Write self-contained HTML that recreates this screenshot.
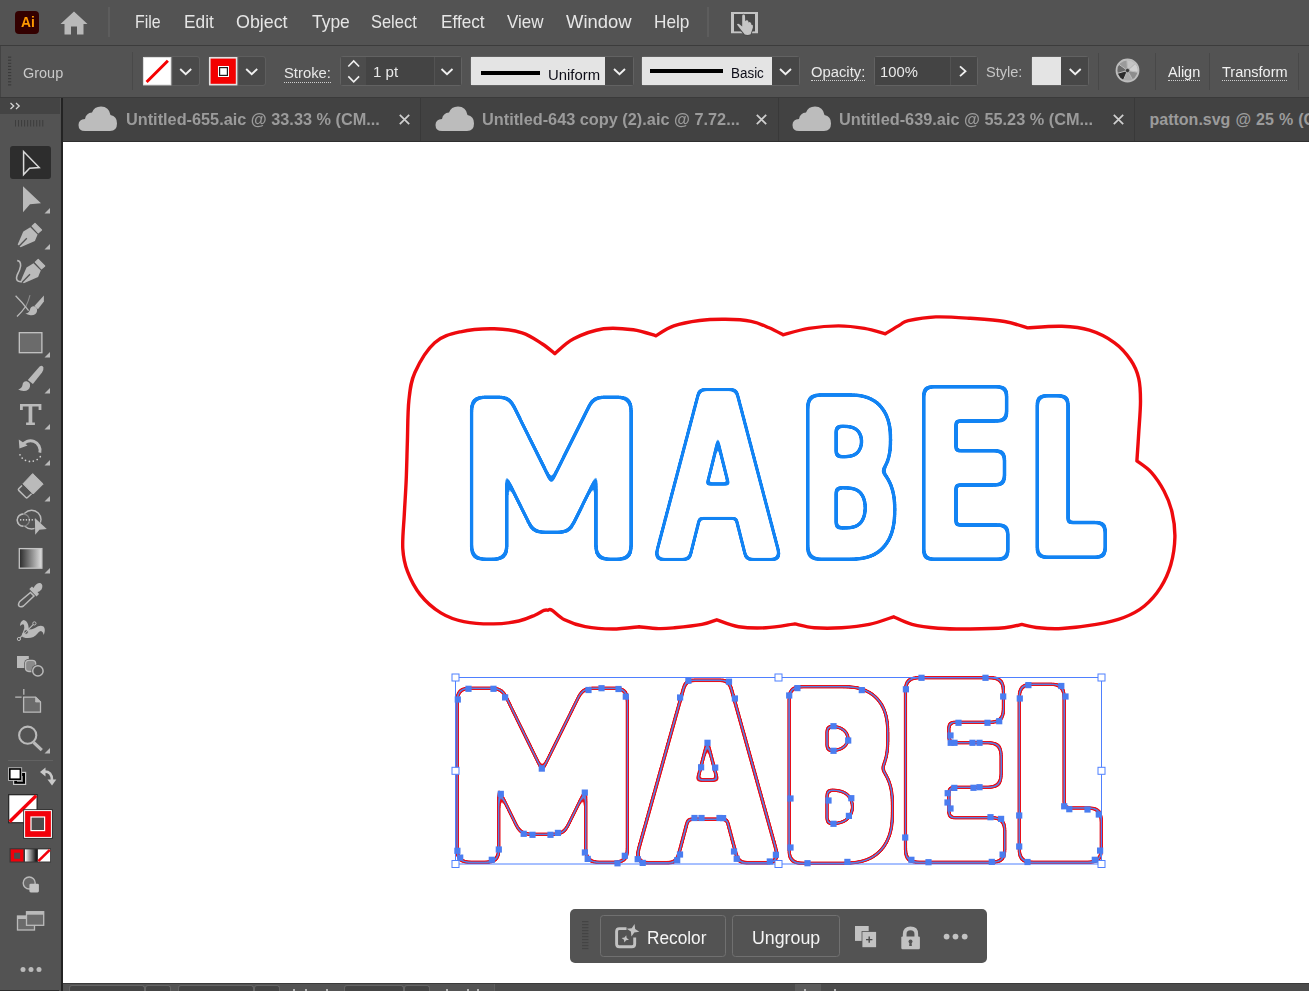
<!DOCTYPE html>
<html lang="en"><head><meta charset="utf-8"><title>Adobe Illustrator</title>
<style>
html,body{margin:0;padding:0}
body{width:1309px;height:991px;overflow:hidden;background:#fff;position:relative;font-family:"Liberation Sans",sans-serif;}
.a{position:absolute;display:block}
.t{position:absolute;white-space:nowrap;line-height:1;transform-origin:0 50%;}
.du{border-bottom:1px dotted #d0d0d0;padding-bottom:1px}
svg{overflow:visible}
</style></head><body>
<div class="a " style="left:0px;top:0px;width:1309px;height:45px;background:#535353;"></div>
<div class="a " style="left:0px;top:45px;width:1309px;height:1px;background:#3c3c3c;"></div>
<div class="a" style="left:15px;top:11px;width:24px;height:23px;background:#330000;border-radius:4px"></div>
<span class="t " style="left:21.00px;top:15px;font-size:14.5px;color:#ff9a00;font-weight:bold;transform:scaleX(0.9517);">Ai</span>
<svg class="a" style="left:60px;top:11px;" width="28" height="24" viewBox="0 0 28 24"><path d="M14 0.5 L27.5 13 L23.5 13 L23.5 23.5 L17 23.5 L17 15.5 L11 15.5 L11 23.5 L4.5 23.5 L4.5 13 L0.5 13 Z" fill="#b9b9b9"/></svg>
<div class="a " style="left:107.7px;top:7px;width:2.6px;height:30px;background:#5d5d5d;"></div>
<span class="t " style="left:134.60px;top:12px;font-size:19px;color:#e6e6e6;transform:scaleX(0.8392);">File</span>
<span class="t " style="left:183.50px;top:12px;font-size:19px;color:#e6e6e6;transform:scaleX(0.9099);">Edit</span>
<span class="t " style="left:236.00px;top:12px;font-size:19px;color:#e6e6e6;transform:scaleX(0.9392);">Object</span>
<span class="t " style="left:311.60px;top:12px;font-size:19px;color:#e6e6e6;transform:scaleX(0.9178);">Type</span>
<span class="t " style="left:371.30px;top:12px;font-size:19px;color:#e6e6e6;transform:scaleX(0.8653);">Select</span>
<span class="t " style="left:440.60px;top:12px;font-size:19px;color:#e6e6e6;transform:scaleX(0.9036);">Effect</span>
<span class="t " style="left:507.40px;top:12px;font-size:19px;color:#e6e6e6;transform:scaleX(0.8940);">View</span>
<span class="t " style="left:566.00px;top:12px;font-size:19px;color:#e6e6e6;transform:scaleX(0.9706);">Window</span>
<span class="t " style="left:653.60px;top:12px;font-size:19px;color:#e6e6e6;transform:scaleX(0.9062);">Help</span>
<div class="a " style="left:706.5px;top:7px;width:2.6px;height:30px;background:#5d5d5d;"></div>
<svg class="a" style="left:731px;top:12px;" width="27" height="24" viewBox="0 0 27 24"><path d="M0 0 H27 V21.3 H0 Z M3 2.1 V19.2 H24 V2.1 Z" fill="#c4c4c4" fill-rule="evenodd"/><rect x="3" y="2.1" width="21" height="17.1" fill="#494949"/><path d="M11.2 4 Q11.2 2.6 12.6 2.6 Q14 2.6 14 4 L14.2 9.3 Q15 7.9 16.3 8.2 Q17.5 8.7 17.5 10.4 Q18.5 9.7 19.5 10.4 Q20.5 11.2 20.3 12.7 Q21.4 12.4 21.9 13.5 Q22.4 15 21 18.2 L19.6 22.2 Q17 23.6 13.8 22.6 L9 16.6 L6 12.6 Q6.5 11.2 8 12 L11.2 14.6 Z" fill="#c6c6c6" stroke="#4b4b4b" stroke-width="1.8" paint-order="stroke"/></svg>
<div class="a " style="left:0px;top:46px;width:1309px;height:51px;background:#535353;"></div>
<div class="a " style="left:0px;top:46px;width:1px;height:51px;background:#434343;"></div>
<div class="a " style="left:0px;top:96.7px;width:1309px;height:1.6px;background:#3a3a3a;"></div>
<svg class="a" style="left:8px;top:56px;" width="4" height="30" viewBox="0 0 4 30"><rect x="0" y="0.60" width="3.2" height="1.1" fill="#3a3a3a"/><rect x="0" y="3.68" width="3.2" height="1.1" fill="#3a3a3a"/><rect x="0" y="6.76" width="3.2" height="1.1" fill="#3a3a3a"/><rect x="0" y="9.84" width="3.2" height="1.1" fill="#3a3a3a"/><rect x="0" y="12.92" width="3.2" height="1.1" fill="#3a3a3a"/><rect x="0" y="16.00" width="3.2" height="1.1" fill="#3a3a3a"/><rect x="0" y="19.08" width="3.2" height="1.1" fill="#3a3a3a"/><rect x="0" y="22.16" width="3.2" height="1.1" fill="#3a3a3a"/><rect x="0" y="25.24" width="3.2" height="1.1" fill="#3a3a3a"/><rect x="0" y="28.32" width="3.2" height="1.1" fill="#3a3a3a"/></svg>
<span class="t " style="left:23.20px;top:65px;font-size:15px;color:#c9c9c9;transform:scaleX(0.9643);">Group</span>
<div class="a " style="left:132px;top:52px;width:1px;height:38px;background:#494949;"></div>
<div class="a " style="left:142px;top:56px;width:58px;height:30px;background:transparent;border:1px solid #5e5e5e;border-radius:3px;box-sizing:border-box"></div>
<div class="a " style="left:172.5px;top:57px;width:26.5px;height:28.4px;background:#4a4a4a;border-radius:0 3px 3px 0"></div>
<svg class="a" style="left:143px;top:57px;" width="28.4" height="28.4" viewBox="0 0 28.4 28.4"><rect width="28.4" height="28.4" fill="#dcdcdc"/><rect x="1" y="1" width="26.4" height="26.4" fill="#fff"/><path d="M3.6 25 L24.9 3.8" stroke="#f50000" stroke-width="3"/></svg>
<svg class="a" style="left:0px;top:0px;" width="1309" height="100" viewBox="0 0 1309 100"><path d="M180.2 69 l5.5 5.2 l5.5 -5.2" fill="none" stroke="#f0f0f0" stroke-width="1.9"/></svg>
<div class="a " style="left:208px;top:56px;width:58px;height:30px;background:transparent;border:1px solid #5e5e5e;border-radius:3px;box-sizing:border-box"></div>
<div class="a " style="left:238.5px;top:57px;width:26px;height:28.4px;background:#4a4a4a;border-radius:0 3px 3px 0"></div>
<svg class="a" style="left:209px;top:57px;" width="28.4" height="28.4" viewBox="0 0 28.4 28.4"><rect width="28.4" height="28.4" fill="#e2e2e2"/><rect x="1.6" y="1.6" width="25.2" height="25.2" fill="#f30000"/><rect x="9" y="9" width="11" height="11" fill="#fff"/><rect x="10.6" y="10.6" width="7.8" height="7.8" fill="#fff" stroke="#1e1e1e" stroke-width="1.2"/></svg>
<svg class="a" style="left:0px;top:0px;" width="1309" height="100" viewBox="0 0 1309 100"><path d="M246.2 69 l5.5 5.2 l5.5 -5.2" fill="none" stroke="#f0f0f0" stroke-width="1.9"/></svg>
<span class="t " style="left:283.90px;top:65px;font-size:15.5px;color:#e9e9e9;transform:scaleX(0.9547);">Stroke:</span>
<div class="a " style="left:284px;top:81px;width:47px;height:1px;background:transparent;border-bottom:1.5px dotted #cfcfcf"></div>
<div class="a " style="left:340px;top:56px;width:122px;height:30px;background:transparent;border:1px solid #626262;border-radius:3px;box-sizing:border-box"></div>
<div class="a " style="left:366px;top:57px;width:68px;height:28px;background:#444;"></div>
<div class="a " style="left:435px;top:57px;width:26px;height:28px;background:#474747;"></div>
<div class="a " style="left:341px;top:57px;width:25px;height:28px;background:#4c4c4c;"></div>
<svg class="a" style="left:0px;top:0px;" width="1309" height="100" viewBox="0 0 1309 100"><path d="M348.3 66.5 l5.4 -5.6 l5.4 5.6 M348.3 76.4 l5.4 5.4 l5.4 -5.4" fill="none" stroke="#f0f0f0" stroke-width="1.6"/></svg>
<span class="t " style="left:372.80px;top:64px;font-size:15.5px;color:#e9e9e9;transform:scaleX(0.9739);">1 pt</span>
<svg class="a" style="left:0px;top:0px;" width="1309" height="100" viewBox="0 0 1309 100"><path d="M441.5 69 l5.5 5.2 l5.5 -5.2" fill="none" stroke="#f0f0f0" stroke-width="1.9"/></svg>
<div class="a " style="left:470px;top:56px;width:164px;height:30px;background:transparent;border:1px solid #626262;border-radius:3px;box-sizing:border-box"></div>
<div class="a " style="left:471px;top:57px;width:134px;height:28px;background:#e4e4e4;"></div>
<div class="a " style="left:605px;top:57px;width:28px;height:28px;background:#474747;"></div>
<div class="a " style="left:481px;top:70.5px;width:59px;height:4px;background:#000;"></div>
<span class="t " style="left:547.50px;top:67px;font-size:15.5px;color:#0d0d18;transform:scaleX(0.9585);">Uniform</span>
<svg class="a" style="left:0px;top:0px;" width="1309" height="100" viewBox="0 0 1309 100"><path d="M614 69 l5.5 5.2 l5.5 -5.2" fill="none" stroke="#f0f0f0" stroke-width="1.9"/></svg>
<div class="a " style="left:641px;top:56px;width:159px;height:30px;background:transparent;border:1px solid #626262;border-radius:3px;box-sizing:border-box"></div>
<div class="a " style="left:642px;top:57px;width:130px;height:28px;background:#e4e4e4;"></div>
<div class="a " style="left:772px;top:57px;width:27px;height:28px;background:#474747;"></div>
<div class="a " style="left:649.8px;top:69px;width:73.4px;height:4px;background:#000;"></div>
<span class="t " style="left:731.30px;top:65px;font-size:15.5px;color:#0d0d18;transform:scaleX(0.8660);">Basic</span>
<svg class="a" style="left:0px;top:0px;" width="1309" height="100" viewBox="0 0 1309 100"><path d="M780 69 l5.5 5.2 l5.5 -5.2" fill="none" stroke="#f0f0f0" stroke-width="1.9"/></svg>
<span class="t " style="left:810.70px;top:64px;font-size:15.5px;color:#e9e9e9;transform:scaleX(0.9547);">Opacity:</span>
<div class="a " style="left:811px;top:79px;width:54px;height:1px;background:transparent;border-bottom:1.5px dotted #cfcfcf"></div>
<div class="a " style="left:874px;top:56px;width:104px;height:30px;background:transparent;border:1px solid #626262;border-radius:3px;box-sizing:border-box"></div>
<div class="a " style="left:875px;top:57px;width:75px;height:28px;background:#444;"></div>
<div class="a " style="left:951px;top:57px;width:26px;height:28px;background:#474747;"></div>
<span class="t " style="left:879.50px;top:64px;font-size:15.5px;color:#e9e9e9;transform:scaleX(0.9539);">100%</span>
<svg class="a" style="left:0px;top:0px;" width="1309" height="100" viewBox="0 0 1309 100"><path d="M960 66.3 l5.5 4.9 l-5.5 4.9" fill="none" stroke="#f0f0f0" stroke-width="1.8"/></svg>
<span class="t " style="left:986.00px;top:64px;font-size:15.5px;color:#c6c6c6;transform:scaleX(0.9394);">Style:</span>
<div class="a " style="left:1031px;top:56px;width:58px;height:30px;background:transparent;border:1px solid #626262;border-radius:3px;box-sizing:border-box"></div>
<div class="a " style="left:1032px;top:57px;width:29px;height:28px;background:#e4e4e4;"></div>
<div class="a " style="left:1061px;top:57px;width:27px;height:28px;background:#474747;"></div>
<svg class="a" style="left:0px;top:0px;" width="1309" height="100" viewBox="0 0 1309 100"><path d="M1069.7 69 l5.5 5.2 l5.5 -5.2" fill="none" stroke="#f0f0f0" stroke-width="1.9"/></svg>
<div class="a " style="left:1098px;top:53px;width:1px;height:37px;background:#484848;"></div>
<div class="a " style="left:1155px;top:53px;width:1px;height:37px;background:#484848;"></div>
<div class="a " style="left:1209px;top:53px;width:1px;height:37px;background:#484848;"></div>
<div class="a " style="left:1298px;top:53px;width:1px;height:37px;background:#484848;"></div>
<svg class="a" style="left:1115px;top:58px;" width="25" height="25" viewBox="0 0 25 25"><path d="M12.5 12.5 L22.84 14.32 A10.5 10.5 0 0 1 17.52 21.72 Z" fill="#8d8d8d"/><path d="M12.5 12.5 L17.52 21.72 A10.5 10.5 0 0 1 8.42 22.18 Z" fill="#a9a9a9"/><path d="M12.5 12.5 L8.42 22.18 A10.5 10.5 0 0 1 2.39 15.34 Z" fill="#2b2b2b"/><path d="M12.5 12.5 L2.39 15.34 A10.5 10.5 0 0 1 3.97 6.37 Z" fill="#6a6a6a"/><path d="M12.5 12.5 L3.97 6.37 A10.5 10.5 0 0 1 11.98 2.01 Z" fill="#9a9a9a"/><path d="M12.5 12.5 L11.98 2.01 A10.5 10.5 0 0 1 20.37 5.55 Z" fill="#c4c4c4"/><path d="M12.5 12.5 L20.37 5.55 A10.5 10.5 0 0 1 22.84 14.32 Z" fill="#d0d0d0"/><circle cx="12.5" cy="12.5" r="11" fill="none" stroke="#bdbdbd" stroke-width="1.8"/><path d="M12.5 12.5 L22.84 14.32" stroke="#bdbdbd" stroke-width="1"/><path d="M12.5 12.5 L17.52 21.72" stroke="#bdbdbd" stroke-width="1"/><path d="M12.5 12.5 L8.42 22.18" stroke="#bdbdbd" stroke-width="1"/><path d="M12.5 12.5 L2.39 15.34" stroke="#bdbdbd" stroke-width="1"/><path d="M12.5 12.5 L3.97 6.37" stroke="#bdbdbd" stroke-width="1"/><path d="M12.5 12.5 L11.98 2.01" stroke="#bdbdbd" stroke-width="1"/><path d="M12.5 12.5 L20.37 5.55" stroke="#bdbdbd" stroke-width="1"/><circle cx="12.5" cy="12.5" r="2.2" fill="#3a3a3a" stroke="#bdbdbd" stroke-width="0.8"/></svg>
<span class="t " style="left:1167.60px;top:64px;font-size:15.5px;color:#f0f0f0;transform:scaleX(0.9350);">Align</span>
<div class="a " style="left:1168px;top:79px;width:32px;height:1px;background:transparent;border-bottom:1.5px dotted #cfcfcf"></div>
<span class="t " style="left:1221.70px;top:64px;font-size:15.5px;color:#f0f0f0;transform:scaleX(0.9363);">Transform</span>
<div class="a " style="left:1222px;top:79px;width:65px;height:1px;background:transparent;border-bottom:1.5px dotted #cfcfcf"></div>
<div class="a " style="left:59px;top:98px;width:1250px;height:43px;background:#424242;"></div>
<div class="a " style="left:63px;top:141px;width:1246px;height:1px;background:#2f2f2f;"></div>
<div class="a " style="left:59.3px;top:98px;width:1.7px;height:893px;background:#505050;"></div>
<div class="a " style="left:61px;top:98px;width:2px;height:893px;background:#232323;"></div>
<svg class="a" style="left:77.5px;top:106px;" width="39" height="26" viewBox="0 0 39 26"><path d="M7 25 Q0.5 25 0.5 19 Q0.5 13.5 7 13 Q8 7 14 6.5 Q16 0.5 23 0.5 Q31 0.5 32.5 9 Q39 10 39 17.5 Q39 25 32 25 Z" fill="#bcbcbc"/></svg>
<span class="t " style="left:125.60px;top:112px;font-size:16px;color:#9b9b9b;font-weight:bold;transform:scaleX(1.0175);">Untitled-655.aic @ 33.33 % (CM...</span>
<svg class="a" style="left:399px;top:113.5px;" width="11" height="11" viewBox="0 0 11 11"><path d="M0.8 0.8 L10.2 10.2 M10.2 0.8 L0.8 10.2" stroke="#cfcfcf" stroke-width="1.7" fill="none"/></svg>
<div class="a " style="left:420px;top:98px;width:1px;height:43px;background:#393939;"></div>
<svg class="a" style="left:434.8px;top:106px;" width="39" height="26" viewBox="0 0 39 26"><path d="M7 25 Q0.5 25 0.5 19 Q0.5 13.5 7 13 Q8 7 14 6.5 Q16 0.5 23 0.5 Q31 0.5 32.5 9 Q39 10 39 17.5 Q39 25 32 25 Z" fill="#bcbcbc"/></svg>
<span class="t " style="left:482.30px;top:112px;font-size:16px;color:#9b9b9b;font-weight:bold;transform:scaleX(1.0186);">Untitled-643 copy (2).aic @ 7.72...</span>
<svg class="a" style="left:756px;top:113.5px;" width="11" height="11" viewBox="0 0 11 11"><path d="M0.8 0.8 L10.2 10.2 M10.2 0.8 L0.8 10.2" stroke="#cfcfcf" stroke-width="1.7" fill="none"/></svg>
<div class="a " style="left:778px;top:98px;width:1px;height:43px;background:#393939;"></div>
<svg class="a" style="left:791.5px;top:106px;" width="39" height="26" viewBox="0 0 39 26"><path d="M7 25 Q0.5 25 0.5 19 Q0.5 13.5 7 13 Q8 7 14 6.5 Q16 0.5 23 0.5 Q31 0.5 32.5 9 Q39 10 39 17.5 Q39 25 32 25 Z" fill="#bcbcbc"/></svg>
<span class="t " style="left:839.40px;top:112px;font-size:16px;color:#9b9b9b;font-weight:bold;transform:scaleX(1.0187);">Untitled-639.aic @ 55.23 % (CM...</span>
<svg class="a" style="left:1113px;top:113.5px;" width="11" height="11" viewBox="0 0 11 11"><path d="M0.8 0.8 L10.2 10.2 M10.2 0.8 L0.8 10.2" stroke="#cfcfcf" stroke-width="1.7" fill="none"/></svg>
<div class="a " style="left:1134px;top:98px;width:1px;height:43px;background:#393939;"></div>
<span class="t" style="left:1149.5px;top:112px;font-size:16px;color:#9b9b9b;font-weight:bold;transform:scaleX(1.0);word-spacing:0.6px">patton.svg @ 25 % (C</span>
<div class="a " style="left:0px;top:98px;width:60px;height:893px;background:#535353;"></div>
<div class="a " style="left:0px;top:98.3px;width:60px;height:15.7px;background:#444;"></div>
<svg class="a" style="left:0px;top:0px;" width="63" height="991" viewBox="0 0 63 991"><path d="M10.5 103 l3.2 3 l-3.2 3 M16 103 l3.2 3 l-3.2 3" fill="none" stroke="#d4d4d4" stroke-width="1.3"/><rect x="15.00" y="120" width="1" height="6.5" fill="#3d3d3d"/><rect x="18.03" y="120" width="1" height="6.5" fill="#3d3d3d"/><rect x="21.06" y="120" width="1" height="6.5" fill="#3d3d3d"/><rect x="24.09" y="120" width="1" height="6.5" fill="#3d3d3d"/><rect x="27.12" y="120" width="1" height="6.5" fill="#3d3d3d"/><rect x="30.15" y="120" width="1" height="6.5" fill="#3d3d3d"/><rect x="33.18" y="120" width="1" height="6.5" fill="#3d3d3d"/><rect x="36.21" y="120" width="1" height="6.5" fill="#3d3d3d"/><rect x="39.24" y="120" width="1" height="6.5" fill="#3d3d3d"/><rect x="42.27" y="120" width="1" height="6.5" fill="#3d3d3d"/><rect x="10" y="146" width="41" height="33" rx="3" fill="#2d2d2d"/><path d="M23.6 151.6 L23.6 174.6 L29.6 168.2 L39.2 167.6 Z" fill="none" stroke="#dadada" stroke-width="1.5" stroke-linejoin="miter"/><path d="M23 186.3 L23 212.3 L30 204.3 L41 203.3 Z" fill="#bababa"/><path d="M50 208 L50 213.5 L44.5 213.5 Z" fill="#bababa"/><g transform="translate(0,0)"><path d="M23.3 231.6 L30.3 227.3 L37.6 234.6 L34.9 241 L20.6 247.3 L17.7 244.6 Z" fill="#bababa"/><path d="M19 246.2 L26.8 238.2" stroke="#535353" stroke-width="1.3"/><path d="M35 223.4 L41.5 230 L38.3 232.8 L32.1 226.2 Z" fill="#bababa" stroke="#bababa" stroke-width="1.2" stroke-linejoin="round"/></g><path d="M50 244 L50 249.5 L44.5 249.5 Z" fill="#bababa"/><g transform="translate(3.2,36)"><path d="M23.3 231.6 L30.3 227.3 L37.6 234.6 L34.9 241 L20.6 247.3 L17.7 244.6 Z" fill="#bababa"/><path d="M19 246.2 L26.8 238.2" stroke="#535353" stroke-width="1.3"/><path d="M35 223.4 L41.5 230 L38.3 232.8 L32.1 226.2 Z" fill="#bababa" stroke="#bababa" stroke-width="1.2" stroke-linejoin="round"/></g><path d="M17.2 260.6 Q20.8 260.6 20.6 266 Q20 270 17.2 275 Q15.3 280 18.5 281.3 Q20.5 281.8 22 281.4" fill="none" stroke="#bababa" stroke-width="1.6"/><path d="M15.6 295.8 Q22 302 28.6 310.6" fill="none" stroke="#bababa" stroke-width="1.3"/><path d="M26 306 Q22 312 17 316.4" fill="none" stroke="#bababa" stroke-width="1.3"/><path d="M30 295.2 Q28.5 301 26 306" fill="none" stroke="#8c8c8c" stroke-width="1.1"/><path d="M43.9 295.4 L43.9 301.6 L37.9 309.2 L34.4 305.9 Z" fill="#bababa"/><path d="M25.3 313.6 Q29 313 29.9 310 Q30.6 306 34 306.3 Q37.6 307.2 37 311.2 Q36 315.6 30.5 315.2 Q27.5 315 25.3 313.6 Z" fill="#bababa"/><rect x="19.3" y="332.7" width="22.6" height="20" fill="#6b6b6b" stroke="#c4c4c4" stroke-width="1.3"/><path d="M50 352 L50 357.5 L44.5 357.5 Z" fill="#bababa"/><path d="M39.6 366.6 Q42.4 364.6 43.4 367.6 Q43.8 370 42 372.6 L32.9 384 L27.8 380 Z" fill="#bababa"/><path d="M18.2 389.4 Q22 388.5 22.5 385 Q23 381 26.6 381.3 Q30.6 382.3 30 386.6 Q29 391.2 23.5 391 Q20.5 390.8 18.2 389.4 Z" fill="#bababa"/><path d="M50 388 L50 393.5 L44.5 393.5 Z" fill="#bababa"/><path d="M20 404.1 H41.4 V410 H38.6 V406.6 H32.3 V422.4 H34.9 V424.9 H26.1 V422.4 H28.6 V406.6 H22.8 V410 H20 Z" fill="#bababa"/><path d="M50 424 L50 429.5 L44.5 429.5 Z" fill="#bababa"/><path d="M22.0 445.9 A9.6 9.6 0 0 1 39.8 452.7" fill="none" stroke="#bababa" stroke-width="3"/><path d="M18.8 439.6 L19.4 448.4 L27.6 445.4 Z" fill="#bababa"/><circle cx="20" cy="454.8" r="0.85" fill="#d0d0d0"/><circle cx="22.2" cy="458.1" r="0.85" fill="#d0d0d0"/><circle cx="25.5" cy="460.3" r="0.85" fill="#d0d0d0"/><circle cx="29.4" cy="461.4" r="0.85" fill="#d0d0d0"/><circle cx="33.3" cy="461.1" r="0.85" fill="#d0d0d0"/><circle cx="37.2" cy="459.5" r="0.85" fill="#d0d0d0"/><circle cx="40.3" cy="456.7" r="0.85" fill="#d0d0d0"/><path d="M50 460 L50 465.5 L44.5 465.5 Z" fill="#bababa"/><path d="M32.7 473.6 L43.2 484 L33.2 494 L23 483.8 Z" fill="#bababa" stroke="#bababa" stroke-width="1" stroke-linejoin="round"/><path d="M22 485.4 L18.7 488.8 Q18 489.6 18.7 490.4 L25.9 497.5 Q26.7 498.2 27.5 497.5 L31.6 493.8" fill="none" stroke="#bababa" stroke-width="1.5"/><path d="M50 496 L50 501.5 L44.5 501.5 Z" fill="#bababa"/><circle cx="31.6" cy="519.6" r="9.4" fill="none" stroke="#bababa" stroke-width="1.4"/><circle cx="23.3" cy="520.1" r="6.1" fill="#535353" stroke="#858585" stroke-width="1.3"/><path d="M23.3 514 A6.1 6.1 0 0 0 23.3 526.2" fill="none" stroke="#bababa" stroke-width="1.5"/><path d="M20 519.9 H35" stroke="#ececec" stroke-width="1.2" stroke-dasharray="1.3 1.6"/><path d="M34.9 518 L35.2 534.8 L39.4 529.7 L46.8 528.9 Z" fill="#bababa" stroke="#535353" stroke-width="1" paint-order="stroke"/><defs><linearGradient id="gr" x1="0" x2="1"><stop offset="0" stop-color="#2a2a2a"/><stop offset="1" stop-color="#e0e0e0"/></linearGradient></defs><rect x="19.3" y="548.6" width="22.6" height="19.6" fill="url(#gr)" stroke="#c4c4c4" stroke-width="1.3"/><path d="M50 568 L50 573.5 L44.5 573.5 Z" fill="#bababa"/><path d="M30.5 592.5 L34 596 L23.5 606 Q20.5 607.5 19 606 Q17.8 604.3 19.5 601.8 Z" fill="none" stroke="#bababa" stroke-width="1.5"/><path d="M29.3 589 L32 586.5 L33.5 588 Q36.5 582.5 40.3 583 Q43.8 584.5 41.5 589.5 Q39 592 37.5 592 L39 594 L36.5 596.5 Z" fill="#bababa"/><path d="M20 626 Q20 621.5 23.5 620 Q27 620.5 28.2 625 Q28.8 627.5 28.8 629.5 Q32 629.5 35 628 Q40 624.5 43.5 626.5 Q46 629 43.8 635 Q43 631.5 41 631 Q39 631 37.5 633.5 Q34 638 28 638 Q23 638 21.8 636 Q21.5 634 23.3 631.5 Q25 628 24 625 Q23 623 20 626 Z" fill="#bababa"/><path d="M18.9 638.9 L34.4 623.4" stroke="#bababa" stroke-width="1.1"/><circle cx="18.9" cy="639" r="1.6" fill="#535353" stroke="#bababa" stroke-width="1"/><circle cx="34.4" cy="623.4" r="1.6" fill="#535353" stroke="#bababa" stroke-width="1"/><circle cx="26.1" cy="632" r="2.3" fill="#535353" stroke="#bababa" stroke-width="1"/><path d="M24 634.2 L28.3 629.9" stroke="#bababa" stroke-width="1"/><rect x="17" y="656" width="11.8" height="12" fill="#bababa"/><rect x="24.2" y="659" width="12.8" height="13.8" rx="4.4" fill="#535353"/><rect x="25.5" y="660.3" width="10.2" height="11.2" rx="3.4" fill="#8a8a8a" stroke="#bababa" stroke-width="1.3"/><circle cx="37.9" cy="670.9" r="6.6" fill="#535353"/><circle cx="37.9" cy="670.9" r="5.2" fill="#535353" stroke="#bababa" stroke-width="1.5"/><path d="M23.8 689 V694.8 M15.2 697.2 H21.6" stroke="#bababa" stroke-width="1.3" fill="none"/><path d="M23.6 697.1 H35.6 L40.5 702 V712.2 H23.6 Z" fill="#6b6b6b" stroke="#bababa" stroke-width="1.3"/><path d="M35.6 697.1 L40.5 702 H35.6 Z" fill="#bababa" stroke="#bababa" stroke-width="0.8"/><circle cx="27.7" cy="735.2" r="8.6" fill="none" stroke="#bababa" stroke-width="2.1"/><path d="M33.6 742.4 L41.8 750.2" stroke="#bababa" stroke-width="3.2" stroke-linecap="butt"/><path d="M50 748 L50 753.5 L44.5 753.5 Z" fill="#bababa"/><rect x="8" y="760" width="45" height="1" fill="#626262"/><rect x="13.6" y="772.4" width="12" height="12" fill="#000" stroke="#c9c9c9" stroke-width="1.2"/><rect x="17.5" y="776.5" width="5" height="5" fill="none" stroke="#8a8a8a" stroke-width="0.9"/><rect x="8.1" y="767.3" width="14" height="13.6" fill="#bdbdbd"/><rect x="9" y="768.2" width="12.2" height="11.8" fill="#000"/><rect x="10.6" y="769.8" width="9" height="8.6" fill="#fff"/><path d="M44.5 771.5 Q52 771.5 52 780" fill="none" stroke="#c9c9c9" stroke-width="2.6"/><path d="M40 772 L45.5 767.5 L45.5 776.5 Z" fill="#c9c9c9"/><path d="M47.5 779.5 L56.3 779.5 L52 785.5 Z" fill="#c9c9c9"/><rect x="8" y="794" width="29.7" height="29.3" fill="#2a2a2a"/><rect x="9.3" y="795.3" width="27.2" height="26.8" fill="#fff"/><path d="M9.6 821.8 L36.2 795.6" stroke="#f4000a" stroke-width="3.4"/><rect x="23.2" y="809.2" width="29.6" height="29.6" fill="#2e2e2e"/><rect x="24.1" y="810.1" width="27.8" height="27.8" fill="#fff"/><rect x="25.1" y="811.1" width="25.8" height="25.8" fill="#f2000a"/><rect x="30.4" y="816.4" width="14.8" height="14.8" fill="#fff"/><rect x="31.6" y="817.6" width="12.4" height="12.4" fill="#4d4d4d"/><rect x="9.5" y="848.1" width="41.5" height="14.5" fill="#3a3a3a"/><rect x="10.7" y="849.4" width="12.7" height="12.1" fill="#f2000a"/><rect x="14.1" y="852.7" width="6" height="6.1" fill="#4d4d4d"/><defs><linearGradient id="g2" x1="0" x2="1"><stop offset="0" stop-color="#fff"/><stop offset="1" stop-color="#0c0c0c"/></linearGradient></defs><rect x="25" y="849.4" width="11.7" height="12.1" fill="url(#g2)"/><rect x="38" y="849.4" width="12.1" height="12.1" fill="#fff"/><path d="M38.3 861.2 L49.8 849.8" stroke="#f2000a" stroke-width="2.6"/><circle cx="29.2" cy="883" r="6" fill="#686868" stroke="#bababa" stroke-width="1.4"/><rect x="29.4" y="883.7" width="9.5" height="8.8" rx="1.4" fill="#c4c4c4"/><rect x="17.5" y="916" width="17" height="14" fill="#6b6b6b" stroke="#bababa" stroke-width="1.3"/><rect x="17.5" y="916" width="17" height="3" fill="#bababa"/><rect x="26.5" y="911.7" width="17.2" height="13.6" fill="#6b6b6b" stroke="#bababa" stroke-width="1.3"/><rect x="26.5" y="911.7" width="17.2" height="3" fill="#bababa"/><circle cx="23" cy="969.6" r="2.5" fill="#bababa"/><circle cx="31" cy="969.6" r="2.5" fill="#bababa"/><circle cx="39" cy="969.6" r="2.5" fill="#bababa"/></svg>
<svg class="a" style="left:0px;top:0px;" width="1309" height="991" viewBox="0 0 1309 991"><path d="M548.0 610.2 C547.3 610.2 546.2 609.6 544.0 610.4 C541.8 611.2 539.0 613.4 534.8 615.2 C530.6 617.0 525.7 619.5 518.8 621.0 C511.9 622.5 502.8 623.8 493.6 623.9 C484.4 624.0 472.6 623.4 463.8 621.6 C455.0 619.8 448.1 617.4 440.8 612.9 C433.5 608.4 425.7 601.5 420.2 594.6 C414.7 587.7 410.5 579.3 407.6 571.7 C404.7 564.1 403.4 558.3 402.8 548.8 C402.2 539.2 403.7 525.9 404.3 514.4 C404.9 502.9 405.7 491.7 406.2 480.0 C406.7 468.3 406.9 457.3 407.3 444.0 C407.8 430.7 407.6 412.2 408.9 400.3 C410.2 388.4 410.6 382.1 414.9 372.5 C419.2 362.9 427.1 349.5 434.7 342.7 C442.3 335.9 450.6 334.1 460.5 331.8 C470.4 329.5 484.0 328.6 494.3 328.8 C504.6 329.0 514.1 330.3 522.1 332.8 C530.1 335.3 536.5 340.2 542.0 343.7 C547.5 347.2 552.8 352.0 554.9 353.7 L554.9 353.7 C558.0 351.2 565.6 342.9 573.7 338.8 C581.8 334.7 593.6 330.3 603.5 328.8 C613.4 327.3 624.6 328.6 633.3 329.8 C642.0 331.0 652.1 334.8 655.9 335.8 L655.9 335.8 C658.9 334.1 666.5 328.4 673.8 325.9 C681.1 323.3 691.0 321.6 699.6 320.5 C708.2 319.4 716.8 319.2 725.4 319.3 C734.0 319.4 743.9 319.9 751.2 321.3 C758.5 322.7 763.8 325.6 769.1 327.8 C774.4 330.1 780.7 333.6 783.0 334.8 L783.0 334.8 C787.3 333.7 799.5 329.9 808.8 328.4 C818.1 326.9 829.3 325.9 838.6 325.9 C847.9 325.9 856.6 327.1 864.4 328.4 C872.2 329.7 881.8 332.9 885.3 333.8 L885.3 333.8 C887.8 332.3 896.2 327.1 900.0 324.9 C903.8 322.7 902.3 321.9 908.3 320.6 C914.3 319.3 925.5 317.3 935.8 316.9 C946.1 316.5 958.7 317.5 970.2 318.3 C981.7 319.1 995.1 319.9 1004.6 321.5 C1014.1 323.1 1023.7 326.8 1027.5 327.9 L1027.5 327.9 C1033.2 327.6 1051.6 325.9 1061.9 326.3 C1072.2 326.7 1080.6 327.4 1089.4 330.2 C1098.2 332.9 1107.7 337.8 1114.6 342.8 C1121.5 347.8 1126.7 354.1 1130.7 360.0 C1134.7 365.9 1137.1 371.4 1138.7 378.3 C1140.3 385.2 1140.5 392.1 1140.5 401.3 C1140.5 410.5 1139.3 423.5 1138.7 433.4 C1138.1 443.3 1137.2 456.3 1136.9 460.9 L1136.9 460.9 C1139.3 462.8 1146.8 467.3 1151.3 472.3 C1155.8 477.3 1160.5 484.4 1164.0 491.0 C1167.5 497.6 1170.2 504.3 1172.0 512.0 C1173.8 519.7 1175.1 528.5 1174.9 537.3 C1174.7 546.1 1173.2 556.4 1170.8 564.8 C1168.4 573.2 1164.9 580.8 1160.5 587.7 C1156.1 594.6 1150.5 601.0 1144.4 606.0 C1138.3 611.0 1131.8 614.4 1123.8 617.5 C1115.8 620.6 1106.6 622.6 1096.3 624.4 C1086.0 626.2 1071.5 627.9 1061.9 628.5 C1052.4 629.1 1045.7 628.5 1039.0 627.8 C1032.3 627.1 1024.7 625.0 1021.8 624.4 L1021.8 624.4 C1018.9 625.0 1013.2 627.0 1004.6 627.8 C996.0 628.6 981.3 628.9 970.2 629.0 C959.1 629.1 947.7 629.0 938.0 628.2 C928.3 627.4 919.4 626.2 912.0 624.3 C904.6 622.4 896.8 618.0 893.7 616.8 L893.7 616.8 C889.6 618.1 877.9 622.6 869.2 624.4 C860.5 626.2 850.9 627.2 841.7 627.8 C832.5 628.4 822.0 628.4 814.2 627.8 C806.4 627.1 798.0 624.5 794.7 623.9 L794.7 623.9 C789.9 624.5 775.5 627.3 766.1 627.8 C756.8 628.3 746.8 628.0 738.6 626.7 C730.4 625.4 720.4 620.9 716.8 619.8 L716.8 619.8 C714.3 620.6 709.0 623.1 701.9 624.4 C694.8 625.7 681.6 627.1 674.4 627.8 C667.2 628.5 664.5 628.8 658.6 628.6 C652.7 628.4 642.4 627.0 639.1 626.7 L639.1 626.7 C634.7 627.1 621.7 629.0 612.7 629.0 C603.7 629.0 593.2 628.2 585.2 626.7 C577.2 625.2 570.1 622.5 564.6 619.8 C559.1 617.0 554.8 611.8 552.0 610.2 C549.2 608.6 548.7 610.2 548.0 610.2 Z" fill="none" stroke="#ee0a0e" stroke-width="3.4" stroke-linejoin="round"/><filter id="tM" filterUnits="userSpaceOnUse" x="458" y="384" width="187" height="189" color-interpolation-filters="sRGB"><feMorphology in="SourceAlpha" operator="dilate" radius="6.00 6.00" result="d"/><feGaussianBlur in="d" stdDeviation="4.00" result="b"/><feComponentTransfer in="b" result="o0"><feFuncA type="linear" slope="66.624" intercept="-2.548"/></feComponentTransfer><feComponentTransfer in="b" result="i0"><feFuncA type="linear" slope="22.316" intercept="-4.147"/></feComponentTransfer><feComposite in="o0" in2="i0" operator="out" result="r0"/><feFlood flood-color="#1283f3" result="c0"/><feComposite in="c0" in2="r0" operator="in" result="k0"/><feMerge><feMergeNode in="k0"/></feMerge></filter><filter id="tA" filterUnits="userSpaceOnUse" x="643" y="376" width="150" height="196" color-interpolation-filters="sRGB"><feMorphology in="SourceAlpha" operator="dilate" radius="1.50 1.50" result="d"/><feGaussianBlur in="d" stdDeviation="2.50" result="b"/><feComponentTransfer in="b" result="o0"><feFuncA type="linear" slope="42.531" intercept="-1.395"/></feComponentTransfer><feComponentTransfer in="b" result="i0"><feFuncA type="linear" slope="10.488" intercept="-3.507"/></feComponentTransfer><feComposite in="o0" in2="i0" operator="out" result="r0"/><feFlood flood-color="#1283f3" result="c0"/><feComposite in="c0" in2="r0" operator="in" result="k0"/><feMerge><feMergeNode in="k0"/></feMerge></filter><filter id="tB" filterUnits="userSpaceOnUse" x="794" y="380" width="114" height="192" color-interpolation-filters="sRGB"><feMorphology in="SourceAlpha" operator="dilate" radius="3.00 3.00" result="d"/><feGaussianBlur in="d" stdDeviation="4.00" result="b"/><feComponentTransfer in="b" result="o0"><feFuncA type="linear" slope="45.080" intercept="-2.894"/></feComponentTransfer><feComponentTransfer in="b" result="i0"><feFuncA type="linear" slope="18.792" intercept="-4.891"/></feComponentTransfer><feComposite in="o0" in2="i0" operator="out" result="r0"/><feFlood flood-color="#1283f3" result="c0"/><feComposite in="c0" in2="r0" operator="in" result="k0"/><feMerge><feMergeNode in="k0"/></feMerge></filter><filter id="tE" filterUnits="userSpaceOnUse" x="910" y="373" width="112" height="201" color-interpolation-filters="sRGB"><feMorphology in="SourceAlpha" operator="dilate" radius="6.00 5.00" result="d"/><feGaussianBlur in="d" stdDeviation="3.00" result="b"/><feComponentTransfer in="b" result="o0"><feFuncA type="linear" slope="42.141" intercept="-1.888"/></feComponentTransfer><feComponentTransfer in="b" result="i0"><feFuncA type="linear" slope="13.123" intercept="-3.942"/></feComponentTransfer><feComposite in="o0" in2="i0" operator="out" result="r0"/><feFlood flood-color="#1283f3" result="c0"/><feComposite in="c0" in2="r0" operator="in" result="k0"/><feMerge><feMergeNode in="k0"/></feMerge></filter><filter id="tL" filterUnits="userSpaceOnUse" x="1024" y="382" width="96" height="189" color-interpolation-filters="sRGB"><feMorphology in="SourceAlpha" operator="dilate" radius="7.00 6.00" result="d"/><feGaussianBlur in="d" stdDeviation="3.00" result="b"/><feComponentTransfer in="b" result="o0"><feFuncA type="linear" slope="42.141" intercept="-1.888"/></feComponentTransfer><feComponentTransfer in="b" result="i0"><feFuncA type="linear" slope="13.123" intercept="-3.942"/></feComponentTransfer><feComposite in="o0" in2="i0" operator="out" result="r0"/><feFlood flood-color="#1283f3" result="c0"/><feComposite in="c0" in2="r0" operator="in" result="k0"/><feMerge><feMergeNode in="k0"/></feMerge></filter><g aria-label="MABEL"><g filter="url(#tM)"><text transform="translate(442.36,548.00) scale(1.2650,0.9534)" font-family="'DejaVu Sans',sans-serif" font-weight="200" font-size="200" fill="#000">M</text></g><g filter="url(#tA)"><text transform="translate(656.79,554.50) scale(0.8459,1.1664)" font-family="'Liberation Sans',sans-serif" font-weight="700" font-size="200" fill="#000">A</text></g><g filter="url(#tB)"><text transform="translate(801.24,551.70) scale(0.7010,1.0302)" font-family="'DejaVu Sans',sans-serif" font-weight="400" font-size="200" fill="#000">B</text></g><g filter="url(#tE)"><text transform="translate(919.27,551.20) scale(0.6993,1.0734)" font-family="'DejaVu Sans',sans-serif" font-weight="400" font-size="200" fill="#000">E</text></g><g filter="url(#tL)"><text transform="translate(1037.22,548.00) scale(0.5236,0.9787)" font-family="'DejaVu Sans',sans-serif" font-weight="400" font-size="200" fill="#000">L</text></g></g><filter id="bM" filterUnits="userSpaceOnUse" x="444" y="674" width="198" height="202" color-interpolation-filters="sRGB"><feMorphology in="SourceAlpha" operator="dilate" radius="9.60 9.60" result="d"/><feGaussianBlur in="d" stdDeviation="4.30" result="b"/><feComponentTransfer in="b" result="o0"><feFuncA type="linear" slope="47.171" intercept="-3.180"/></feComponentTransfer><feComponentTransfer in="b" result="i0"><feFuncA type="linear" slope="20.421" intercept="-5.228"/></feComponentTransfer><feComposite in="o0" in2="i0" operator="out" result="r0"/><feFlood flood-color="#e8101a" result="c0"/><feComposite in="c0" in2="r0" operator="in" result="k0"/><feComponentTransfer in="b" result="o1"><feFuncA type="linear" slope="33.906" intercept="-3.652"/></feComponentTransfer><feComponentTransfer in="b" result="i1"><feFuncA type="linear" slope="24.484" intercept="-4.427"/></feComponentTransfer><feComposite in="o1" in2="i1" operator="out" result="r1"/><feFlood flood-color="#5a7fe0" result="c1"/><feComposite in="c1" in2="r1" operator="in" result="k1"/><feMerge><feMergeNode in="k0"/><feMergeNode in="k1"/></feMerge></filter><filter id="bA" filterUnits="userSpaceOnUse" x="624" y="666" width="168" height="210" color-interpolation-filters="sRGB"><feMorphology in="SourceAlpha" operator="dilate" radius="3.20 3.20" result="d"/><feGaussianBlur in="d" stdDeviation="3.00" result="b"/><feComponentTransfer in="b" result="o0"><feFuncA type="linear" slope="43.274" intercept="-1.871"/></feComponentTransfer><feComponentTransfer in="b" result="i0"><feFuncA type="linear" slope="13.034" intercept="-3.991"/></feComponentTransfer><feComposite in="o0" in2="i0" operator="out" result="r0"/><feFlood flood-color="#e8101a" result="c0"/><feComposite in="c0" in2="r0" operator="in" result="k0"/><feComponentTransfer in="b" result="o1"><feFuncA type="linear" slope="25.742" intercept="-2.299"/></feComponentTransfer><feComponentTransfer in="b" result="i1"><feFuncA type="linear" slope="16.142" intercept="-3.078"/></feComponentTransfer><feComposite in="o1" in2="i1" operator="out" result="r1"/><feFlood flood-color="#5a7fe0" result="c1"/><feComposite in="c1" in2="r1" operator="in" result="k1"/><feMerge><feMergeNode in="k0"/><feMergeNode in="k1"/></feMerge></filter><filter id="bB" filterUnits="userSpaceOnUse" x="776" y="673" width="130" height="204" color-interpolation-filters="sRGB"><feMorphology in="SourceAlpha" operator="dilate" radius="6.50 6.50" result="d"/><feGaussianBlur in="d" stdDeviation="4.30" result="b"/><feComponentTransfer in="b" result="o0"><feFuncA type="linear" slope="47.171" intercept="-3.180"/></feComponentTransfer><feComponentTransfer in="b" result="i0"><feFuncA type="linear" slope="20.421" intercept="-5.228"/></feComponentTransfer><feComposite in="o0" in2="i0" operator="out" result="r0"/><feFlood flood-color="#e8101a" result="c0"/><feComposite in="c0" in2="r0" operator="in" result="k0"/><feComponentTransfer in="b" result="o1"><feFuncA type="linear" slope="33.906" intercept="-3.652"/></feComponentTransfer><feComponentTransfer in="b" result="i1"><feFuncA type="linear" slope="24.484" intercept="-4.427"/></feComponentTransfer><feComposite in="o1" in2="i1" operator="out" result="r1"/><feFlood flood-color="#5a7fe0" result="c1"/><feComposite in="c1" in2="r1" operator="in" result="k1"/><feMerge><feMergeNode in="k0"/><feMergeNode in="k1"/></feMerge></filter><filter id="bE" filterUnits="userSpaceOnUse" x="891" y="664" width="128" height="213" color-interpolation-filters="sRGB"><feMorphology in="SourceAlpha" operator="dilate" radius="10.20 9.20" result="d"/><feGaussianBlur in="d" stdDeviation="4.30" result="b"/><feComponentTransfer in="b" result="o0"><feFuncA type="linear" slope="47.171" intercept="-3.180"/></feComponentTransfer><feComponentTransfer in="b" result="i0"><feFuncA type="linear" slope="20.421" intercept="-5.228"/></feComponentTransfer><feComposite in="o0" in2="i0" operator="out" result="r0"/><feFlood flood-color="#e8101a" result="c0"/><feComposite in="c0" in2="r0" operator="in" result="k0"/><feComponentTransfer in="b" result="o1"><feFuncA type="linear" slope="33.906" intercept="-3.652"/></feComponentTransfer><feComponentTransfer in="b" result="i1"><feFuncA type="linear" slope="24.484" intercept="-4.427"/></feComponentTransfer><feComposite in="o1" in2="i1" operator="out" result="r1"/><feFlood flood-color="#5a7fe0" result="c1"/><feComposite in="c1" in2="r1" operator="in" result="k1"/><feMerge><feMergeNode in="k0"/><feMergeNode in="k1"/></feMerge></filter><filter id="bL" filterUnits="userSpaceOnUse" x="1006" y="671" width="110" height="205" color-interpolation-filters="sRGB"><feMorphology in="SourceAlpha" operator="dilate" radius="12.70 14.70" result="d"/><feGaussianBlur in="d" stdDeviation="4.30" result="b"/><feComponentTransfer in="b" result="o0"><feFuncA type="linear" slope="47.171" intercept="-3.180"/></feComponentTransfer><feComponentTransfer in="b" result="i0"><feFuncA type="linear" slope="20.421" intercept="-5.228"/></feComponentTransfer><feComposite in="o0" in2="i0" operator="out" result="r0"/><feFlood flood-color="#e8101a" result="c0"/><feComposite in="c0" in2="r0" operator="in" result="k0"/><feComponentTransfer in="b" result="o1"><feFuncA type="linear" slope="33.906" intercept="-3.652"/></feComponentTransfer><feComponentTransfer in="b" result="i1"><feFuncA type="linear" slope="24.484" intercept="-4.427"/></feComponentTransfer><feComposite in="o1" in2="i1" operator="out" result="r1"/><feFlood flood-color="#5a7fe0" result="c1"/><feComposite in="c1" in2="r1" operator="in" result="k1"/><feMerge><feMergeNode in="k0"/><feMergeNode in="k1"/></feMerge></filter><g aria-label="MABEL"><g filter="url(#bM)"><text transform="translate(429.36,848.10) scale(1.3084,0.9993)" font-family="'DejaVu Sans',sans-serif" font-weight="200" font-size="200" fill="#000">M</text></g><g filter="url(#bA)"><text transform="translate(638.98,856.30) scale(0.9472,1.2362)" font-family="'Liberation Sans',sans-serif" font-weight="700" font-size="200" fill="#000">A</text></g><g filter="url(#bB)"><text transform="translate(784.95,851.70) scale(0.7823,1.0555)" font-family="'DejaVu Sans',sans-serif" font-weight="400" font-size="200" fill="#000">B</text></g><g filter="url(#bE)"><text transform="translate(905.03,849.00) scale(0.7526,1.0837)" font-family="'DejaVu Sans',sans-serif" font-weight="400" font-size="200" fill="#000">E</text></g><g filter="url(#bL)"><text transform="translate(1026.22,843.00) scale(0.5236,0.9506)" font-family="'DejaVu Sans',sans-serif" font-weight="400" font-size="200" fill="#000">L</text></g></g><rect x="455.5" y="677.5" width="646" height="186.5" fill="none" stroke="#4f80ff" stroke-width="1"/><rect x="452.0" y="674.0" width="7" height="7" fill="#fff" stroke="#4f80ff" stroke-width="1"/><rect x="452.0" y="767.3" width="7" height="7" fill="#fff" stroke="#4f80ff" stroke-width="1"/><rect x="452.0" y="860.5" width="7" height="7" fill="#fff" stroke="#4f80ff" stroke-width="1"/><rect x="775.0" y="674.0" width="7" height="7" fill="#fff" stroke="#4f80ff" stroke-width="1"/><rect x="775.0" y="860.5" width="7" height="7" fill="#fff" stroke="#4f80ff" stroke-width="1"/><rect x="1098.0" y="674.0" width="7" height="7" fill="#fff" stroke="#4f80ff" stroke-width="1"/><rect x="1098.0" y="767.3" width="7" height="7" fill="#fff" stroke="#4f80ff" stroke-width="1"/><rect x="1098.0" y="860.5" width="7" height="7" fill="#fff" stroke="#4f80ff" stroke-width="1"/><g fill="#4a7df0"><rect x="454.7" y="696.4" width="6.2" height="6.2"/><rect x="465.4" y="685.7" width="6.2" height="6.2"/><rect x="490.4" y="685.7" width="6.2" height="6.2"/><rect x="502.0" y="694.3" width="6.2" height="6.2"/><rect x="538.7" y="765.5" width="6.2" height="6.2"/><rect x="585.4" y="686.9" width="6.2" height="6.2"/><rect x="598.4" y="685.1" width="6.2" height="6.2"/><rect x="615.4" y="685.9" width="6.2" height="6.2"/><rect x="622.7" y="693.5" width="6.2" height="6.2"/><rect x="621.7" y="852.7" width="6.2" height="6.2"/><rect x="614.4" y="860.2" width="6.2" height="6.2"/><rect x="584.6" y="855.8" width="6.2" height="6.2"/><rect x="581.8" y="849.4" width="6.2" height="6.2"/><rect x="581.7" y="789.5" width="6.2" height="6.2"/><rect x="554.8" y="829.8" width="6.2" height="6.2"/><rect x="547.4" y="831.7" width="6.2" height="6.2"/><rect x="529.4" y="831.7" width="6.2" height="6.2"/><rect x="520.6" y="830.7" width="6.2" height="6.2"/><rect x="497.7" y="790.8" width="6.2" height="6.2"/><rect x="495.7" y="846.4" width="6.2" height="6.2"/><rect x="488.7" y="856.7" width="6.2" height="6.2"/><rect x="457.1" y="854.5" width="6.2" height="6.2"/><rect x="454.3" y="847.7" width="6.2" height="6.2"/><rect x="677.0" y="694.4" width="6.2" height="6.2"/><rect x="685.3" y="677.6" width="6.2" height="6.2"/><rect x="725.9" y="678.6" width="6.2" height="6.2"/><rect x="731.8" y="695.4" width="6.2" height="6.2"/><rect x="772.8" y="851.7" width="6.2" height="6.2"/><rect x="766.7" y="858.4" width="6.2" height="6.2"/><rect x="733.6" y="855.7" width="6.2" height="6.2"/><rect x="730.9" y="848.4" width="6.2" height="6.2"/><rect x="720.0" y="815.0" width="6.2" height="6.2"/><rect x="716.4" y="814.9" width="6.2" height="6.2"/><rect x="698.4" y="814.9" width="6.2" height="6.2"/><rect x="691.4" y="814.9" width="6.2" height="6.2"/><rect x="676.9" y="851.4" width="6.2" height="6.2"/><rect x="674.1" y="857.1" width="6.2" height="6.2"/><rect x="639.6" y="859.8" width="6.2" height="6.2"/><rect x="634.6" y="856.1" width="6.2" height="6.2"/><rect x="704.4" y="739.7" width="6.2" height="6.2"/><rect x="712.1" y="764.5" width="6.2" height="6.2"/><rect x="698.0" y="764.2" width="6.2" height="6.2"/><rect x="786.1" y="692.4" width="6.2" height="6.2"/><rect x="794.3" y="685.0" width="6.2" height="6.2"/><rect x="858.7" y="687.0" width="6.2" height="6.2"/><rect x="848.2" y="795.1" width="6.2" height="6.2"/><rect x="844.3" y="858.8" width="6.2" height="6.2"/><rect x="804.4" y="860.1" width="6.2" height="6.2"/><rect x="787.4" y="844.4" width="6.2" height="6.2"/><rect x="787.4" y="795.4" width="6.2" height="6.2"/><rect x="830.4" y="723.1" width="6.2" height="6.2"/><rect x="845.1" y="737.4" width="6.2" height="6.2"/><rect x="830.4" y="747.7" width="6.2" height="6.2"/><rect x="825.4" y="797.4" width="6.2" height="6.2"/><rect x="845.8" y="812.8" width="6.2" height="6.2"/><rect x="830.4" y="820.7" width="6.2" height="6.2"/><rect x="902.8" y="686.2" width="6.2" height="6.2"/><rect x="918.4" y="674.7" width="6.2" height="6.2"/><rect x="982.4" y="674.7" width="6.2" height="6.2"/><rect x="1000.1" y="693.4" width="6.2" height="6.2"/><rect x="996.1" y="718.1" width="6.2" height="6.2"/><rect x="984.4" y="719.7" width="6.2" height="6.2"/><rect x="955.4" y="719.7" width="6.2" height="6.2"/><rect x="947.4" y="732.4" width="6.2" height="6.2"/><rect x="947.6" y="739.7" width="6.2" height="6.2"/><rect x="951.4" y="739.7" width="6.2" height="6.2"/><rect x="969.4" y="739.7" width="6.2" height="6.2"/><rect x="976.4" y="739.7" width="6.2" height="6.2"/><rect x="976.4" y="784.1" width="6.2" height="6.2"/><rect x="970.4" y="784.7" width="6.2" height="6.2"/><rect x="951.2" y="784.8" width="6.2" height="6.2"/><rect x="944.6" y="790.1" width="6.2" height="6.2"/><rect x="944.4" y="799.4" width="6.2" height="6.2"/><rect x="947.4" y="805.4" width="6.2" height="6.2"/><rect x="987.4" y="814.1" width="6.2" height="6.2"/><rect x="998.0" y="815.8" width="6.2" height="6.2"/><rect x="999.5" y="851.5" width="6.2" height="6.2"/><rect x="988.7" y="858.8" width="6.2" height="6.2"/><rect x="925.4" y="859.1" width="6.2" height="6.2"/><rect x="908.3" y="856.7" width="6.2" height="6.2"/><rect x="902.1" y="834.4" width="6.2" height="6.2"/><rect x="1016.7" y="695.4" width="6.2" height="6.2"/><rect x="1025.3" y="682.0" width="6.2" height="6.2"/><rect x="1058.2" y="682.9" width="6.2" height="6.2"/><rect x="1062.4" y="693.4" width="6.2" height="6.2"/><rect x="1061.1" y="803.2" width="6.2" height="6.2"/><rect x="1066.2" y="806.1" width="6.2" height="6.2"/><rect x="1084.4" y="806.4" width="6.2" height="6.2"/><rect x="1095.7" y="811.4" width="6.2" height="6.2"/><rect x="1097.0" y="847.5" width="6.2" height="6.2"/><rect x="1091.7" y="856.7" width="6.2" height="6.2"/><rect x="1024.4" y="858.9" width="6.2" height="6.2"/><rect x="1016.1" y="843.4" width="6.2" height="6.2"/><rect x="1016.1" y="812.4" width="6.2" height="6.2"/></g></svg>
<div class="a " style="left:569.8px;top:908.9px;width:417.4px;height:54px;background:#535353;border-radius:5px"></div>
<svg class="a" style="left:581.8px;top:921px;" width="8" height="30" viewBox="0 0 8 30"><rect x="0" y="0.00" width="6.4" height="1.25" fill="#444"/><rect x="0" y="2.99" width="6.4" height="1.25" fill="#444"/><rect x="0" y="5.98" width="6.4" height="1.25" fill="#444"/><rect x="0" y="8.97" width="6.4" height="1.25" fill="#444"/><rect x="0" y="11.96" width="6.4" height="1.25" fill="#444"/><rect x="0" y="14.95" width="6.4" height="1.25" fill="#444"/><rect x="0" y="17.94" width="6.4" height="1.25" fill="#444"/><rect x="0" y="20.93" width="6.4" height="1.25" fill="#444"/><rect x="0" y="23.92" width="6.4" height="1.25" fill="#444"/><rect x="0" y="26.91" width="6.4" height="1.25" fill="#444"/></svg>
<div class="a " style="left:600px;top:915px;width:126px;height:42px;background:transparent;border:1px solid #707070;border-radius:3.5px;box-sizing:border-box"></div>
<div class="a " style="left:732px;top:915px;width:108px;height:42px;background:transparent;border:1px solid #707070;border-radius:3.5px;box-sizing:border-box"></div>
<span class="t " style="left:647.40px;top:929px;font-size:18px;color:#f4f4f4;transform:scaleX(0.9581);">Recolor</span>
<span class="t " style="left:751.60px;top:929px;font-size:18px;color:#f4f4f4;transform:scaleX(0.9875);">Ungroup</span>
<svg class="a" style="left:0px;top:0px;" width="1309" height="991" viewBox="0 0 1309 991"><path d="M626.5 928.6 H619.4 Q616.6 928.6 616.6 931.4 V944 Q616.6 946.8 619.4 946.8 H631.9 Q634.7 946.8 634.7 944 V937.6" fill="none" stroke="#c2c2c2" stroke-width="2.9"/><path d="M634.57 923.99 L635.14 929.01 L639.31 931.87 L634.29 932.44 L631.43 936.61 L630.86 931.59 L626.69 928.73 L631.71 928.16 Z" fill="#c2c2c2"/><path d="M626.22 935.21 L626.67 938.08 L628.99 939.82 L626.12 940.27 L624.38 942.59 L623.93 939.72 L621.61 937.98 L624.48 937.53 Z" fill="#c2c2c2"/></svg>
<svg class="a" style="left:855px;top:926px;" width="22" height="22" viewBox="0 0 22 22"><rect x="0" y="0" width="13.7" height="14.9" fill="#c2c2c2"/><rect x="6.6" y="5.1" width="15.2" height="16.8" fill="#535353"/><rect x="7.4" y="5.9" width="13.7" height="15.3" fill="#c2c2c2"/><path d="M14.2 10.4 V16.8 M11 13.6 H17.4" stroke="#4a4a4a" stroke-width="1.4"/></svg>
<svg class="a" style="left:901px;top:925.5px;" width="19" height="24" viewBox="0 0 19 24"><path d="M3.7 11.5 V8 Q3.7 2.4 9.5 2.4 Q15.3 2.4 15.3 8 V11.5" fill="none" stroke="#c2c2c2" stroke-width="3.7"/><rect x="0.3" y="10.4" width="18.6" height="12.8" rx="1.2" fill="#c2c2c2"/><circle cx="9.5" cy="15.6" r="2" fill="#535353"/><path d="M8.6 15.6 H10.4 L10.9 20 H8.1 Z" fill="#535353"/></svg>
<svg class="a" style="left:940px;top:930px;" width="32" height="14" viewBox="0 0 32 14"><circle cx="6.6" cy="6.6" r="2.9" fill="#c2c2c2"/><circle cx="15.5" cy="6.6" r="2.9" fill="#c2c2c2"/><circle cx="24.7" cy="6.6" r="2.9" fill="#c2c2c2"/></svg>
<div class="a " style="left:63px;top:983px;width:1246px;height:8px;background:#535353;"></div>
<div class="a " style="left:63px;top:983px;width:1246px;height:1.2px;background:#3a3a3a;"></div>
<div class="a " style="left:68.5px;top:984.7px;width:76px;height:8px;background:#444;border:1px solid #646464;border-bottom:none;box-sizing:border-box;border-radius:3px 3px 0 0"></div>
<div class="a " style="left:144.5px;top:984.7px;width:26px;height:8px;background:#444;border:1px solid #646464;border-bottom:none;box-sizing:border-box;border-radius:3px 3px 0 0"></div>
<div class="a " style="left:178px;top:984.7px;width:76px;height:8px;background:#444;border:1px solid #646464;border-bottom:none;box-sizing:border-box;border-radius:3px 3px 0 0"></div>
<div class="a " style="left:254px;top:984.7px;width:26px;height:8px;background:#444;border:1px solid #646464;border-bottom:none;box-sizing:border-box;border-radius:3px 3px 0 0"></div>
<div class="a " style="left:344px;top:984.7px;width:60px;height:8px;background:#444;border:1px solid #646464;border-bottom:none;box-sizing:border-box;border-radius:3px 3px 0 0"></div>
<div class="a " style="left:404px;top:984.7px;width:26px;height:8px;background:#444;border:1px solid #646464;border-bottom:none;box-sizing:border-box;border-radius:3px 3px 0 0"></div>
<div class="a " style="left:493.5px;top:984.2px;width:816px;height:7px;background:#4b4b4b;"></div>
<div class="a " style="left:493.5px;top:984.2px;width:1px;height:7px;background:#5e5e5e;"></div>
<div class="a " style="left:794.5px;top:984.2px;width:26px;height:7px;background:#5b5b5b;"></div>
<div class="a " style="left:293px;top:988.6px;width:2.2px;height:2.4px;background:#b5b5b5;"></div>
<div class="a " style="left:305px;top:988.6px;width:2.2px;height:2.4px;background:#b5b5b5;"></div>
<div class="a " style="left:326px;top:988.6px;width:2.2px;height:2.4px;background:#b5b5b5;"></div>
<div class="a " style="left:446px;top:988.6px;width:2.2px;height:2.4px;background:#b5b5b5;"></div>
<div class="a " style="left:467px;top:988.6px;width:2.2px;height:2.4px;background:#b5b5b5;"></div>
<div class="a " style="left:477px;top:988.6px;width:2.2px;height:2.4px;background:#b5b5b5;"></div>
<div class="a " style="left:803.5px;top:988.6px;width:2.2px;height:2.4px;background:#b5b5b5;"></div>
<div class="a " style="left:833.5px;top:988.6px;width:2.2px;height:2.4px;background:#b5b5b5;"></div>
<div class="a " style="left:0px;top:989.7px;width:59.3px;height:1.3px;background:#2c2c2c;"></div>
</body></html>
